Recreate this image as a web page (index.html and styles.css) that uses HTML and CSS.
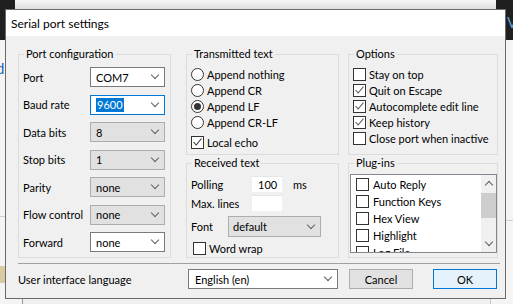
FILE: index.html
```html
<!DOCTYPE html>
<html lang="en">

<head>
    <meta charset="UTF-8">
    <meta name="viewport" content="width=device-width, initial-scale=1.0">
    <title>Serial port settings</title>
    <link rel="stylesheet" href="styles.css">
</head>

<body>
    <div class="desktop">
        <!-- windows behind the dialog -->
        <div class="back-dark back-dark-left"></div>
        <div class="back-dark back-dark-right"></div>
        <div class="back-toolbar"></div>
        <span class="back-letter back-letter-left">d</span>
        <span class="back-letter back-letter-right">V</span>
        <div class="back-line back-line-left"></div>
        <div class="back-band"></div>
        <div class="back-line back-line-right"></div>
        <div class="back-pane"></div>

        <div class="dialog">
            <div class="title-bar">Serial port settings</div>
            <div class="client">
                <div class="groups">
                    <div class="group port-group">
                        <span class="group-title">Port configuration</span>
                        <div class="port-grid">
                            <span>Port</span>
                            <div class="combo combo-white">COM7</div>
                            <span>Baud rate</span>
                            <div class="combo combo-focus"><span class="selection">9600</span></div>
                            <span>Data bits</span>
                            <div class="combo">8</div>
                            <span>Stop bits</span>
                            <div class="combo">1</div>
                            <span>Parity</span>
                            <div class="combo">none</div>
                            <span>Flow control</span>
                            <div class="combo">none</div>
                            <span>Forward</span>
                            <div class="combo combo-white">none</div>
                        </div>
                    </div>

                    <div class="column column-mid">
                        <div class="group group-top">
                            <span class="group-title">Transmitted text</span>
                            <div class="choices">
                                <div class="choice"><span class="radio"></span>Append nothing</div>
                                <div class="choice"><span class="radio"></span>Append CR</div>
                                <div class="choice"><span class="radio on"></span>Append LF</div>
                                <div class="choice"><span class="radio"></span>Append CR-LF</div>
                                <div class="choice choice-gap">
                                    <span class="box"><svg width="11" height="11" viewBox="0 0 11 11"><polyline points="1.5,5 4.2,8 9.5,1.5" fill="none" stroke="#333" stroke-width="1.1"/></svg></span>Local echo
                                </div>
                            </div>
                        </div>
                        <div class="group group-bottom">
                            <span class="group-title">Received text</span>
                            <div class="received">
                                <div class="field-row">
                                    <span class="field-label">Polling</span>
                                    <span class="edit">100</span>
                                    <span class="unit">ms</span>
                                </div>
                                <div class="field-row field-row-next">
                                    <span class="field-label">Max. lines</span>
                                    <span class="edit"></span>
                                </div>
                                <div class="font-row">
                                    <span class="font-label">Font</span>
                                    <div class="combo combo-font">default</div>
                                </div>
                                <div class="choice wrap-row"><span class="box"></span>Word wrap</div>
                            </div>
                        </div>
                    </div>

                    <div class="column column-right">
                        <div class="group group-top">
                            <span class="group-title">Options</span>
                            <div class="choices">
                                <div class="choice"><span class="box"></span>Stay on top</div>
                                <div class="choice"><span class="box"><svg width="11" height="11" viewBox="0 0 11 11"><polyline points="1.5,5 4.2,8 9.5,1.5" fill="none" stroke="#555" stroke-width="1.1"/></svg></span>Quit on Escape</div>
                                <div class="choice"><span class="box"><svg width="11" height="11" viewBox="0 0 11 11"><polyline points="1.5,5 4.2,8 9.5,1.5" fill="none" stroke="#555" stroke-width="1.1"/></svg></span>Autocomplete edit line</div>
                                <div class="choice"><span class="box"><svg width="11" height="11" viewBox="0 0 11 11"><polyline points="1.5,5 4.2,8 9.5,1.5" fill="none" stroke="#555" stroke-width="1.1"/></svg></span>Keep history</div>
                                <div class="choice"><span class="box"></span>Close port when inactive</div>
                            </div>
                        </div>
                        <div class="group group-bottom">
                            <span class="group-title">Plug-ins</span>
                            <div class="plugin-list">
                                <div class="plugin-items">
                                    <div class="plugin"><span class="box"></span>Auto Reply</div>
                                    <div class="plugin"><span class="box"></span>Function Keys</div>
                                    <div class="plugin"><span class="box"></span>Hex View</div>
                                    <div class="plugin"><span class="box"></span>Highlight</div>
                                    <div class="plugin"><span class="box"></span>Log File</div>
                                </div>
                                <div class="scrollbar">
                                    <div class="scroll-arrow scroll-up"></div>
                                    <div class="scroll-thumb"></div>
                                    <div class="scroll-arrow scroll-down"></div>
                                </div>
                            </div>
                        </div>
                    </div>
                </div>

                <div class="separator"></div>

                <div class="footer">
                    <span class="footer-label">User interface language</span>
                    <div class="combo combo-white combo-lang">English (en)</div>
                    <button class="button button-cancel">Cancel</button>
                    <button class="button button-ok">OK</button>
                </div>
            </div>
        </div>
    </div>
</body>

</html>
```

FILE: styles.css
```css
body {
    margin: 0;
    font-family: Lato, "Noto Sans", sans-serif;
    font-size: 11px;
    color: #000;
}

.desktop {
    position: relative;
    width: 513px;
    height: 304px;
    overflow: hidden;
    background-color: #f4f4f4;
}

/* background windows */
.back-dark {
    position: absolute;
    top: 0;
    background-color: #1f1f1f;
}

.back-dark-left {
    left: 0;
    width: 15px;
    height: 40px;
}

.back-dark-right {
    right: 0;
    width: 17px;
    height: 40px;
}

.back-toolbar {
    position: absolute;
    left: 15px;
    top: 0;
    width: 481px;
    height: 9px;
    background: linear-gradient(180deg, #f6f6f6, #dedede);
}

.back-letter {
    position: absolute;
    font-size: 15px;
    line-height: 16px;
}

.back-letter-left {
    left: 0;
    top: 60px;
    width: 4px;
    overflow: hidden;
    text-indent: -4px;
    color: #1c64b4;
}

.back-letter-right {
    left: 507px;
    top: 14px;
    width: 6px;
    overflow: hidden;
    color: #5a9fd8;
}

.back-line {
    position: absolute;
    height: 1px;
    background-color: #cfcfcf;
}

.back-line-left {
    left: 0;
    top: 216px;
    width: 5px;
}

.back-line-right {
    right: 0;
    top: 220px;
    width: 7px;
}

.back-band {
    position: absolute;
    left: 0;
    top: 266px;
    width: 5px;
    height: 17px;
    background-color: #d8cba2;
}

.back-pane {
    position: absolute;
    left: 22px;
    top: 299px;
    width: 467px;
    height: 10px;
    border-left: 1px solid #9a9a9a;
    border-right: 1px solid #c8c8c8;
    background-color: #f0f0f0;
}

/* dialog */
.dialog {
    position: absolute;
    left: 5px;
    top: 9px;
    width: 501px;
    height: 290px;
    box-sizing: border-box;
    border: 1px solid #6a6a6a;
    background-color: #f0f0f0;
    display: flex;
    flex-direction: column;
}

.title-bar {
    height: 26px;
    background-color: #fff;
    padding-left: 5px;
    display: flex;
    align-items: center;
    font-size: 12px;
}

.client {
    flex: 1;
    padding: 18px 0 0 12px;
}

.groups {
    display: flex;
    height: 204px;
}

.group {
    box-sizing: border-box;
    border: 1px solid #dcdcdc;
    display: flex;
    flex-direction: column;
}

.group-title {
    align-self: flex-start;
    margin: -8px 0 0 5px;
    padding: 0 2px;
    line-height: 14px;
    background-color: #f0f0f0;
}

.port-group {
    width: 153px;
}

.column {
    display: flex;
    flex-direction: column;
    gap: 8px;
}

.column-mid {
    width: 153px;
    margin-left: 15px;
}

.column-right {
    width: 150px;
    margin-left: 9px;
}

.group-top {
    height: 101px;
}

.group-bottom {
    flex: 1;
}

/* port configuration */
.port-grid {
    display: grid;
    grid-template-columns: 67px 75px;
    grid-auto-rows: 20px;
    row-gap: 7.5px;
    align-items: center;
    margin: 6px 0 0 4px;
}

.combo {
    box-sizing: border-box;
    height: 20px;
    border: 1px solid #adadad;
    background-color: #e1e1e1;
    display: flex;
    align-items: center;
    padding: 0 6px 0 5px;
}

.combo::after {
    content: "";
    margin-left: auto;
    width: 5px;
    height: 5px;
    border-right: 1px solid #606060;
    border-bottom: 1px solid #606060;
    transform: translateY(-2px) rotate(45deg);
}

.combo-white {
    background-color: #fff;
    border-color: #7a7a7a;
}

.combo-focus {
    background-color: #fff;
    border-color: #0078d7;
}

.selection {
    background-color: #0078d7;
    color: #fff;
    line-height: 14px;
    padding: 0 1px;
}

/* radio and check boxes */
.choices {
    display: flex;
    flex-direction: column;
    margin: 5px 0 0 4px;
}

.choice {
    display: flex;
    align-items: center;
    gap: 3px;
    height: 16px;
    white-space: nowrap;
}

.choice-gap {
    margin-top: 4px;
}

.radio,
.box {
    box-sizing: border-box;
    width: 13px;
    height: 13px;
    flex-shrink: 0;
    border: 1px solid #333;
    background-color: #fff;
    display: flex;
    align-items: center;
    justify-content: center;
}

.radio {
    border-radius: 50%;
}

.radio.on::after {
    content: "";
    width: 7px;
    height: 7px;
    border-radius: 50%;
    background-color: #333;
}

/* received text */
.received {
    display: flex;
    flex-direction: column;
    margin: 6px 0 0 4px;
}

.field-row {
    display: flex;
    align-items: center;
    height: 16px;
}

.field-row-next {
    margin-top: 3px;
}

.field-label {
    width: 61px;
}

.edit {
    box-sizing: border-box;
    width: 30px;
    height: 16px;
    line-height: 15px;
    padding-left: 6px;
    background-color: #fff;
    border-top: 1px solid #e6e6e6;
}

.unit {
    margin-left: 11px;
}

.font-row {
    display: flex;
    align-items: center;
    margin-top: 5px;
}

.font-label {
    width: 37px;
}

.combo-font {
    width: 93px;
    height: 21px;
    padding-left: 4px;
}

.wrap-row {
    margin: 3px 0 0 2px;
}

/* plug-ins list */
.plugin-list {
    box-sizing: border-box;
    width: 147px;
    height: 79px;
    margin: 4px 0 0 1px;
    border: 1px solid #828790;
    background-color: #fff;
    display: flex;
    overflow: hidden;
}

.plugin-items {
    flex: 1;
    padding-top: 1px;
    overflow: hidden;
}

.plugin {
    display: flex;
    align-items: center;
    gap: 4px;
    height: 17px;
    padding-left: 5px;
}

.scrollbar {
    width: 15px;
    background-color: #f0f0f0;
    display: flex;
    flex-direction: column;
    align-items: center;
}

.scroll-arrow {
    width: 5px;
    height: 5px;
    border-left: 1px solid #606060;
    border-top: 1px solid #606060;
}

.scroll-up {
    margin-top: 7px;
    transform: rotate(45deg);
}

.scroll-down {
    margin-top: 21px;
    transform: rotate(225deg);
}

.scroll-thumb {
    align-self: stretch;
    height: 25px;
    margin-top: 5px;
    background-color: #cdcdcd;
}

/* footer */
.separator {
    width: 482px;
    height: 1px;
    margin-top: 5px;
    background-color: #a0a0a0;
}

.footer {
    display: flex;
    align-items: center;
    height: 20px;
    margin-top: 5px;
}

.footer-label {
    width: 170px;
}

.combo-lang {
    width: 150px;
    padding-left: 6px;
}

.button {
    box-sizing: border-box;
    width: 64px;
    height: 20px;
    padding: 0;
    font: inherit;
    color: #000;
    border: 1px solid #adadad;
    background-color: #e1e1e1;
}

.button-cancel {
    margin-left: 11px;
}

.button-ok {
    margin-left: 20px;
    border-color: #0078d7;
    background-color: #e5f1fb;
}
```
